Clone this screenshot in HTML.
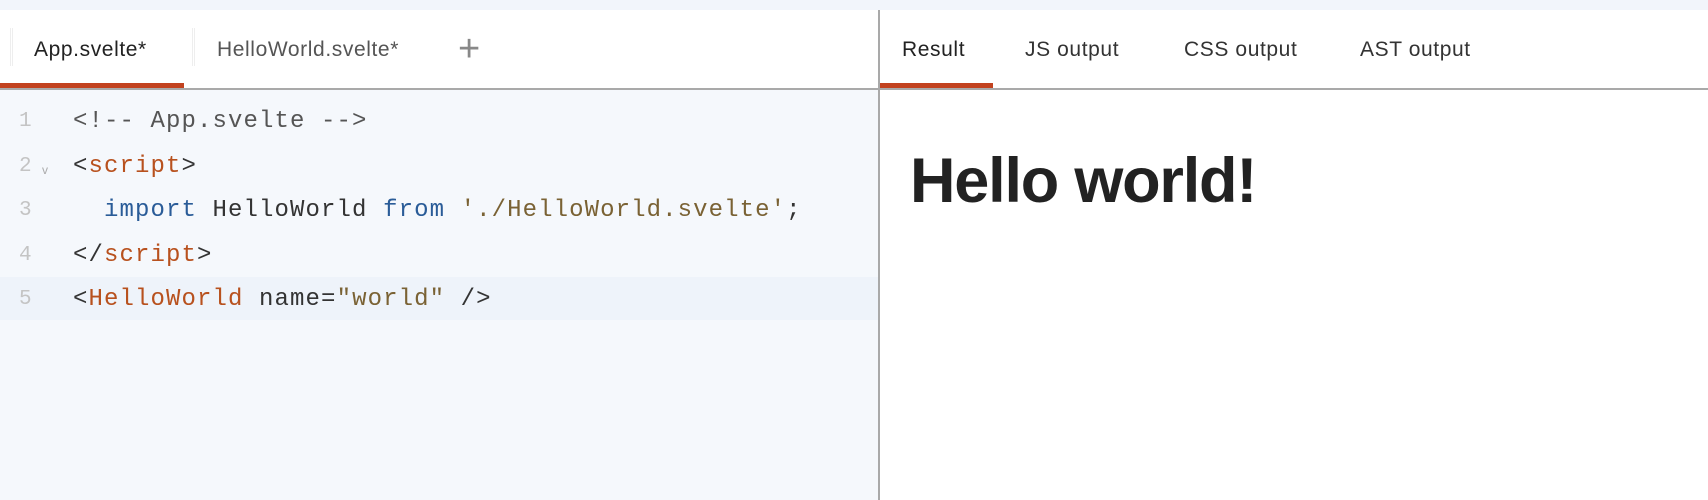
<!DOCTYPE html>
<html><head><style>
*{margin:0;padding:0;box-sizing:border-box}
body{width:1708px;height:500px;overflow:hidden;background:#fff;font-family:"Liberation Sans",sans-serif;position:relative}
.top{position:absolute;left:0;top:0;width:1708px;height:10px;background:#f2f5fb}
.left{position:absolute;left:0;top:10px;width:879px;height:490px;background:#fff}
.ed{position:absolute;left:0;top:90px;width:879px;height:410px;background:#f5f8fc}
.hl{position:absolute;left:0;top:277px;width:879px;height:43px;background:#eef3fa}
.tabline{position:absolute;left:0;top:88px;width:1708px;height:2px;background:#a9a9a9}
.div{position:absolute;left:878px;top:10px;width:2px;height:490px;background:#a9a9a9}
.ul{position:absolute;top:83px;height:5px;background:#c2421f}
.tab{position:absolute;top:38px;font-size:21px;color:#333;letter-spacing:0.6px}
.g{position:absolute;top:28px;width:3px;height:38px;border-left:1px solid #eee;border-right:1px solid #eee}
.code{position:absolute;font-family:"Liberation Mono",monospace;font-size:24px;letter-spacing:1.1px;color:#333;white-space:pre}
.ln{position:absolute;left:19px;font-family:"Liberation Mono",monospace;font-size:21px;color:#c4c4c4}
.t{color:#b8511e}.k{color:#2a5c98}.s{color:#7a6234}.c{color:#555}
h1{position:absolute;left:910px;top:145px;font-size:63px;font-weight:bold;color:#222;letter-spacing:-1.2px}
</style></head><body>
<div class="top"></div>
<div class="left"></div>
<div class="ed"></div>
<div class="hl"></div>
<div class="g" style="left:10px"></div><div class="g" style="left:192px"></div>
<div class="tab" style="left:34px;color:#222">App.svelte*</div>
<div class="tab" style="left:217px;color:#555">HelloWorld.svelte*</div>
<div class="tab" style="left:458px;top:28px;font-size:38px;color:#888;font-weight:300">+</div>
<div class="tab" style="left:902px;color:#222">Result</div>
<div class="tab" style="left:1025px">JS output</div>
<div class="tab" style="left:1184px">CSS output</div>
<div class="tab" style="left:1360px">AST output</div>
<div class="tabline"></div>
<div class="ul" style="left:0;width:184px"></div>
<div class="ul" style="left:880px;width:113px"></div>
<div class="div"></div>
<div class="ln" style="top:110px">1</div>
<div class="ln" style="top:155px">2</div><div style="position:absolute;left:42px;top:163px;font-size:12px;color:#aaa">v</div>
<div class="ln" style="top:199px">3</div>
<div class="ln" style="top:244px">4</div>
<div class="ln" style="top:288px">5</div>
<div class="code" style="left:73px;top:108px"><span class="c">&lt;!-- App.svelte --&gt;</span></div>
<div class="code" style="left:73px;top:153px">&lt;<span class="t">script</span>&gt;</div>
<div class="code" style="left:73px;top:197px">  <span class="k">import</span> HelloWorld <span class="k">from</span> <span class="s">'./HelloWorld.svelte'</span>;</div>
<div class="code" style="left:73px;top:242px">&lt;/<span class="t">script</span>&gt;</div>
<div class="code" style="left:73px;top:286px">&lt;<span class="t">HelloWorld</span> name=<span class="s">"world"</span> /&gt;</div>
<h1>Hello world!</h1>
</body></html>
